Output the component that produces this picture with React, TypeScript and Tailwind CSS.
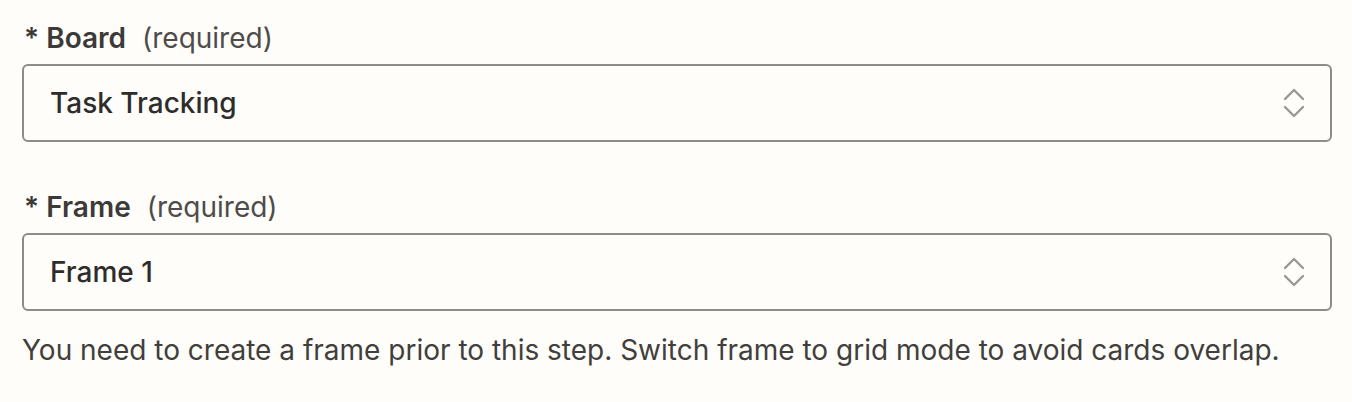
import type { JSX } from "react";

function Chevrons(): JSX.Element {
  return (
    <svg width="22" height="30" viewBox="0 0 22 30" fill="none" className="shrink-0">
      <polyline
        points="2,11 11,2 20,11"
        stroke="#9a9894"
        strokeWidth="2.4"
        strokeLinecap="round"
        strokeLinejoin="round"
      />
      <polyline
        points="2,19 11,28 20,19"
        stroke="#9a9894"
        strokeWidth="2.4"
        strokeLinecap="round"
        strokeLinejoin="round"
      />
    </svg>
  );
}

function SelectField({ label, value }: { label: string; value: string }): JSX.Element {
  return (
    <div className="flex flex-col">
      <div className="flex h-[32px] items-center pl-[2px] text-[28px] leading-[32px]">
        <span className="font-semibold text-[#3b3a39]">* {label}</span>
        <span className="ml-[16px] text-[#4d4c4a]">(required)</span>
      </div>
      <div className="mt-[10px] flex h-[78px] items-center justify-between rounded-[6px] border-2 border-[#8f8c88] pl-[26px] pr-[25px]">
        <span className="text-[28px] font-medium text-[#2e2d2c]">{value}</span>
        <Chevrons />
      </div>
    </div>
  );
}

export default function App() {
  return (
    <div
      className="min-h-[402px] w-full bg-[#fffdf9] pt-[22px] pl-[22px] pr-[20px]"
      style={{ fontFamily: "Inter, 'Noto Sans', sans-serif" }}
    >
      <SelectField label="Board" value="Task Tracking" />
      <div className="mt-[49px]">
        <SelectField label="Frame" value="Frame 1" />
      </div>
      <p className="mt-[23px] text-[28px] leading-[32px] text-[#403f3d]">
        You need to create a frame prior to this step. Switch frame to grid mode to avoid cards overlap.
      </p>
    </div>
  );
}
